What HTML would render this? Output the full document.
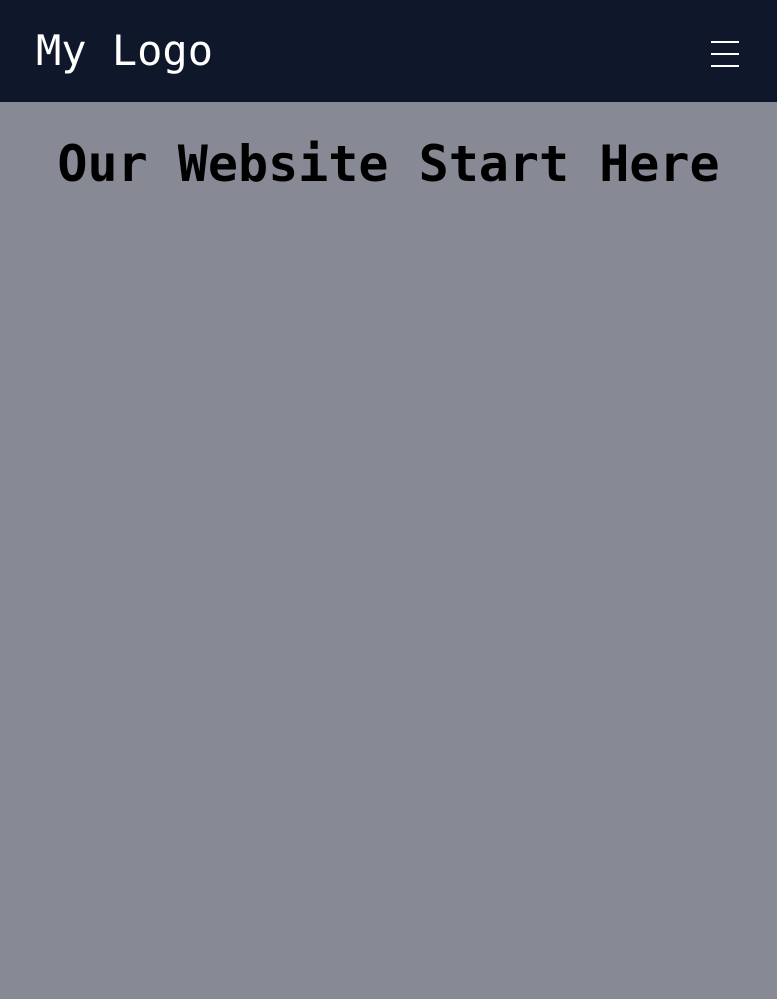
<!DOCTYPE html>
<html><head><style>
html,body{margin:0;padding:0;width:777px;height:999px;background:#878a94;overflow:hidden;font-family:"DejaVu Sans Mono","Liberation Mono",monospace;}
.hdr{position:absolute;left:0;top:0;width:777px;height:102px;background:#0f172a;}
.logo{position:absolute;left:36px;top:26px;font-size:42px;line-height:50px;color:#fff;white-space:pre;}
.burger{position:absolute;left:711px;top:40px;width:28px;height:27px;}
.burger div{position:absolute;left:0;width:28px;height:2px;background:#fff;}
h1{position:absolute;left:0;top:136px;width:777px;margin:0;text-align:center;font-size:50px;line-height:56px;font-weight:bold;color:#000;white-space:pre;}
</style></head><body>
<div class="hdr"><div class="logo">My Logo</div>
<div class="burger"><div style="top:1px"></div><div style="top:13px"></div><div style="top:25px"></div></div></div>
<h1>Our Website Start Here</h1>
</body></html>
